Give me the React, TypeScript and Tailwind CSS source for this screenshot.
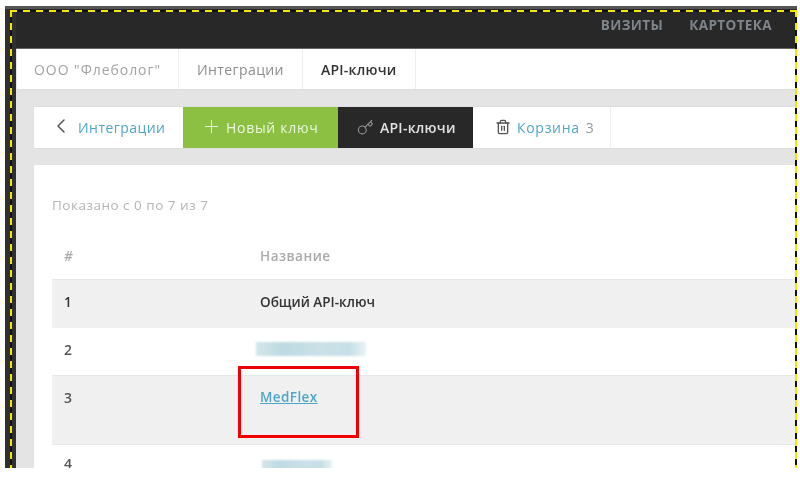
import React from "react";
import { ChevronLeft, Plus, Key, Trash2 } from "lucide-react";

const Blurred = ({ className }: { className: string }) => (
  <div className={`bg-[linear-gradient(90deg,#d3e6eb,#bedae2_25%,#cbe1e7_60%,#c6dfe6_85%,#e8f3f5)] blur-[1.2px] ${className}`} />
);

const App: React.FC = () => {
  return (
    <div className="w-[800px] h-[477px] bg-white overflow-hidden font-['Open_Sans',sans-serif] text-[14px]">
      <div className="relative ml-[5px] mt-[6px] w-[792px] h-[462px] overflow-hidden bg-[#e4e4e4] pl-[12px] pt-[3px]">
        {/* left strip and top strip of the editor frame */}
        <div className="absolute left-0 top-0 bottom-0 w-[11px] bg-[#303030]" />
        <div className="absolute left-0 top-0 right-0 h-[3px] bg-[#555]" />

        {/* header */}
        <div className="flex justify-end items-center h-[40px] bg-[#282828] border-b border-[#666] -ml-[1px] pr-[25px] pb-[6px] gap-[26px] text-[13.5px] tracking-[0.4px] font-bold text-[#7f858b] blur-[0.4px]">
          <span>ВИЗИТЫ</span>
          <span>КАРТОТЕКА</span>
        </div>

        {/* breadcrumb */}
        <div className="flex h-[41px] bg-white border-b border-[#ddd] items-stretch blur-[0.5px]">
          <div className="flex items-center pl-[17px] pr-[17px] border-r border-[#eee] text-[#a3a3a3] tracking-[0.95px]">ООО "Флеболог"</div>
          <div className="flex items-center px-[18px] border-r border-[#eee] text-[#8c8c8c] tracking-[0.4px]">Интеграции</div>
          <div className="flex items-center px-[18px] border-r border-[#eee] font-semibold text-[#333] text-[14px] tracking-[0.25px]">API-ключи</div>
        </div>

        {/* toolbar */}
        <div className="flex h-[43px] mt-[16px] ml-[17px] bg-white border-y border-[#ddd] blur-[0.5px]">
          <div className="flex items-center w-[149px] pl-[18px] gap-[5px] text-[#4fa6c9] tracking-[0.45px]">
            <ChevronLeft size={24} strokeWidth={1.5} className="text-[#555] -ml-[3px] -mt-[3px]" />
            <span>Интеграции</span>
          </div>
          <div className="flex items-center w-[155px] pl-[18px] gap-[4px] bg-[#8cc043] text-[#eef6e0] tracking-[0.7px]">
            <Plus size={21} strokeWidth={1.2} className="-mt-[2px]" />
            <span>Новый ключ</span>
          </div>
          <div className="flex items-center w-[135px] pl-[19px] gap-[6px] bg-[#282828] text-[#e2e2e2] font-semibold text-[14px] tracking-[0.25px]">
            <Key size={17} strokeWidth={1.5} className="text-[#999]" />
            <span>API-ключи</span>
          </div>
          <div className="flex items-center w-[138px] pl-[22px] gap-[6px] border-r border-[#eee]">
            <Trash2 size={16} strokeWidth={2} className="text-[#555] -mt-[2px]" />
            <span className="text-[#4fa6c9] tracking-[0.7px]">Корзина</span>
            <span className="text-[#999]">3</span>
          </div>
        </div>

        {/* card */}
        <div className="mt-[16px] ml-[17px] h-[310px] bg-white pl-[18px] pt-[31px]">
          <div className="text-[13.5px] tracking-[0.5px] text-[#b5b5b5] h-[19px] leading-[19px] blur-[0.5px]">Показано с 0 по 7 из 7</div>
          <div className="flex h-[33px] mt-[31px] font-semibold text-[13.5px] tracking-[0.5px] text-[#aaa] blur-[0.5px]">
            <div className="w-[207px] pl-[12px] italic">#</div>
            <div className="pl-[1px]">Название</div>
          </div>
          <div className="flex h-[49px] pt-[12px] bg-[#f0f0f0] font-semibold text-[13.5px] text-[#333] border-t border-[#e8e8e8]">
            <div className="w-[207px] pl-[12px] blur-[0.4px]">1</div>
            <div className="pl-[1px] blur-[0.5px]">Общий API-ключ</div>
          </div>
          <div className="flex h-[47px] pt-[11px] font-semibold text-[#555]">
            <div className="w-[204px] pl-[12px] blur-[0.4px]">2</div>
            <div className="pt-[3px]">
              <Blurred className="w-[110px] h-[14px]" />
            </div>
          </div>
          <div className="flex h-[70px] pt-[11px] bg-[#f0f0f0] font-semibold text-[#555] border-y border-[#e8e8e8]">
            <div className="w-[207px] pl-[12px] blur-[0.4px]">3</div>
            <div className="pl-[1px] text-[#4fa6c9] underline blur-[0.5px] tracking-[0.4px] text-[13.5px]">MedFlex</div>
          </div>
          <div className="flex h-[47px] pt-[8px] font-semibold text-[#555]">
            <div className="w-[210px] pl-[12px] blur-[0.4px]">4</div>
            <div className="pt-[7px]">
              <Blurred className="w-[70px] h-[14px]" />
            </div>
          </div>
        </div>

        {/* selection outline */}
        <div className="absolute left-[5px] top-[4px] right-0 h-[2px] bg-[repeating-linear-gradient(90deg,#f5e800_0,#f5e800_7px,#111_7px,#111_13px)]" />
        <div className="absolute left-[5px] top-[4px] bottom-0 w-[2px] bg-[repeating-linear-gradient(180deg,#f5e800_0,#f5e800_7px,#111_7px,#111_13px)]" />
        <div className="absolute right-0 top-[4px] bottom-0 w-[2px] bg-[repeating-linear-gradient(180deg,#f5e800_0,#f5e800_7px,#111_7px,#111_13px)]" />

        {/* red highlight */}
        <div className="absolute left-[233px] top-[360px] w-[121px] h-[72px] border-[3px] border-[#f00000]" />
      </div>
    </div>
  );
};

export default App;
